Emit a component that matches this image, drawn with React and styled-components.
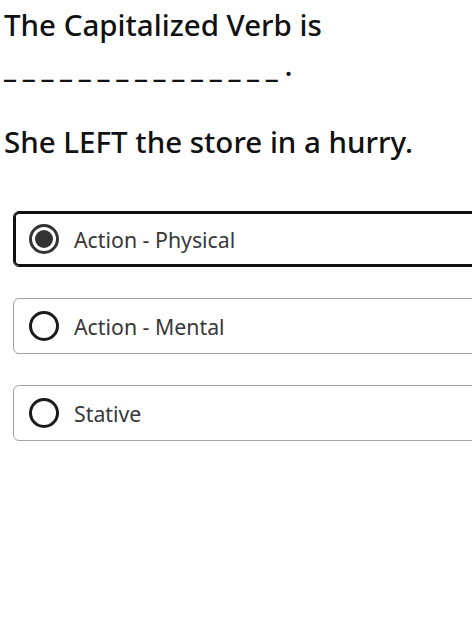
import React, { useState } from 'react';
import styled, { createGlobalStyle } from 'styled-components';

const GlobalStyle = createGlobalStyle`
  html, body {
    margin: 0;
    padding: 0;
    background: #ffffff;
    overflow: hidden;
  }
  body {
    font-family: "Noto Sans", "Open Sans", sans-serif;
    color: #111111;
  }
`;

const Page = styled.div`
  width: 472px;
  height: 638px;
  padding: 5px 0 0 4px;
  box-sizing: border-box;
  overflow: hidden;
`;

const Question = styled.p`
  margin: 0;
  font-size: 29.5px;
  line-height: 40px;
  font-weight: 500;
  color: #111111;
`;

// the blank to fill in: underscores spaced out like a dashed rule
const Blank = styled.span`
  font-family: "DejaVu Sans", sans-serif;
  font-weight: 700;
  font-size: 24px;
  line-height: 0;
  letter-spacing: 6.7px;
`;

const Sentence = styled(Question)`
  margin-top: 37px;
`;

const OptionList = styled.div`
  display: flex;
  flex-direction: column;
  gap: 31px;
  margin: 49px -40px 0 9px;
`;

const Option = styled.label`
  display: flex;
  align-items: center;
  gap: 15px;
  height: 56px;
  box-sizing: border-box;
  padding-left: 15px;
  border: 1px solid ${({ $selected }) => ($selected ? '#111111' : '#a3a3a3')};
  border-radius: 6px;
  box-shadow: ${({ $selected }) => ($selected ? 'inset 0 0 0 2px #111111' : 'none')};
  background: #ffffff;
  cursor: pointer;
`;

const Radio = styled.span`
  position: relative;
  flex: none;
  width: 30px;
  height: 30px;
  box-sizing: border-box;
  border-radius: 50%;
  border: 3px solid ${({ $checked }) => ($checked ? '#333333' : '#1a1a1a')};

  &::after {
    content: '';
    position: absolute;
    inset: 3px;
    border-radius: 50%;
    background: ${({ $checked }) => ($checked ? '#333333' : 'transparent')};
  }
`;

const OptionText = styled.span`
  font-size: 21.3px;
  color: #383838;
`;

const options = ['Action - Physical', 'Action - Mental', 'Stative'];

const App = () => {
  const [selected, setSelected] = useState(0);

  return (
    <>
      <GlobalStyle />
      <Page>
        <Question>
          The Capitalized Verb is <Blank>_______________</Blank>.
        </Question>
        <Sentence>She LEFT the store in a hurry.</Sentence>
        <OptionList>
          {options.map((opt, i) => (
            <Option key={opt} $selected={selected === i} onClick={() => setSelected(i)}>
              <Radio $checked={selected === i} />
              <OptionText>{opt}</OptionText>
            </Option>
          ))}
        </OptionList>
      </Page>
    </>
  );
};

export default App;
